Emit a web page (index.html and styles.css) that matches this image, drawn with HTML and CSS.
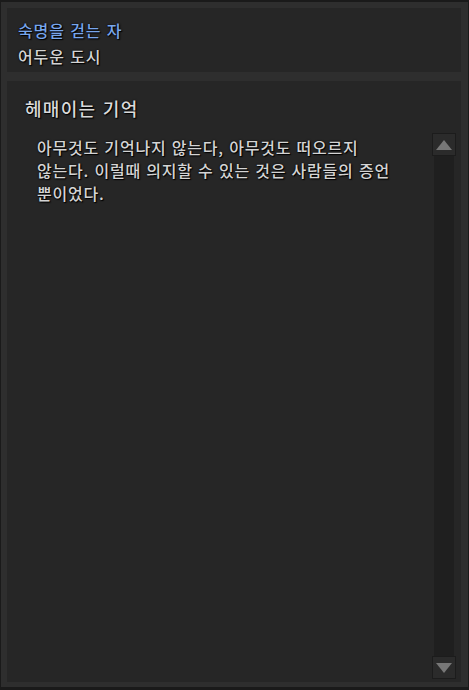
FILE: index.html
```html
<!DOCTYPE html>
<html lang="ko">
<head>
    <meta charset="UTF-8">
    <meta name="viewport" content="width=device-width, initial-scale=1.0">
    <title>숙명을 걷는 자</title>
    <link rel="stylesheet" href="styles.css">
</head>
<body>
    <div class="frame">
        <div class="header">
            <div class="quest-name">숙명을 걷는 자</div>
            <div class="quest-area">어두운 도시</div>
        </div>

        <div class="content">
            <h2 class="entry-title">헤매이는 기억</h2>
            <div class="entry">
                <p class="entry-text">아무것도 기억나지 않는다, 아무것도 떠오르지 않는다. 이럴때 의지할 수 있는 것은 사람들의 증언 뿐이었다.</p>
                <div class="scrollbar">
                    <div class="scroll-btn">
                        <svg width="16" height="10" viewBox="0 0 16 10"><polygon points="8,0 16,10 0,10" fill="#777"/></svg>
                    </div>
                    <div class="scroll-track"></div>
                    <div class="scroll-btn">
                        <svg width="16" height="10" viewBox="0 0 16 10"><polygon points="0,0 16,0 8,10" fill="#777"/></svg>
                    </div>
                </div>
            </div>
        </div>
    </div>
</body>
</html>
```

FILE: styles.css
```css
html, body {
    margin: 0;
    padding: 0;
    height: 100%;
}

body {
    background-color: #1a1a1a;
    font-family: "Noto Sans CJK KR", "Noto Sans", sans-serif;
    font-weight: 500;
    color: #d4d4d4;
    text-shadow: 0 0 2px #000, 1px 1px 1px #000;
}

.frame {
    box-sizing: border-box;
    height: 685px;
    margin: 2px 1px 3px 1px;
    padding: 6px 7px 5px 6px;
    background-color: #2e2e2e;
    display: flex;
    flex-direction: column;
    gap: 9px;
}

.header {
    height: 64px;
    background-color: #262626;
    padding: 9px 0 0 11px;
    box-sizing: border-box;
}

.quest-name {
    color: #78a6ec;
    font-size: 16px;
    line-height: 26px;
    letter-spacing: 0.9px;
}

.quest-area {
    font-size: 16px;
    line-height: 26px;
    letter-spacing: 0.9px;
}

.content {
    flex: 1;
    background-color: #262626;
    display: flex;
    flex-direction: column;
    min-height: 0;
}

.entry-title {
    margin: 0;
    padding: 14px 0 0 18px;
    font-size: 18px;
    font-weight: 500;
    line-height: 26px;
    letter-spacing: 1.3px;
    color: #dadada;
}

.entry {
    flex: 1;
    display: flex;
    min-height: 0;
    padding: 12px 5px 3px 30px;
}

.entry-text {
    flex: 1;
    margin: 0;
    padding: 3px 30px 0 0;
    font-size: 16px;
    line-height: 23px;
    letter-spacing: 0.8px;
    word-break: keep-all;
}

.scrollbar {
    width: 24px;
    display: flex;
    flex-direction: column;
    align-items: center;
}

.scroll-btn {
    box-sizing: border-box;
    width: 24px;
    height: 23px;
    background-color: #2b2b2b;
    border: 1px solid #1c1c1c;
    display: flex;
    align-items: center;
    justify-content: center;
}

.scroll-track {
    flex: 1;
    width: 20px;
    background-color: #1f1f1f;
}
```
